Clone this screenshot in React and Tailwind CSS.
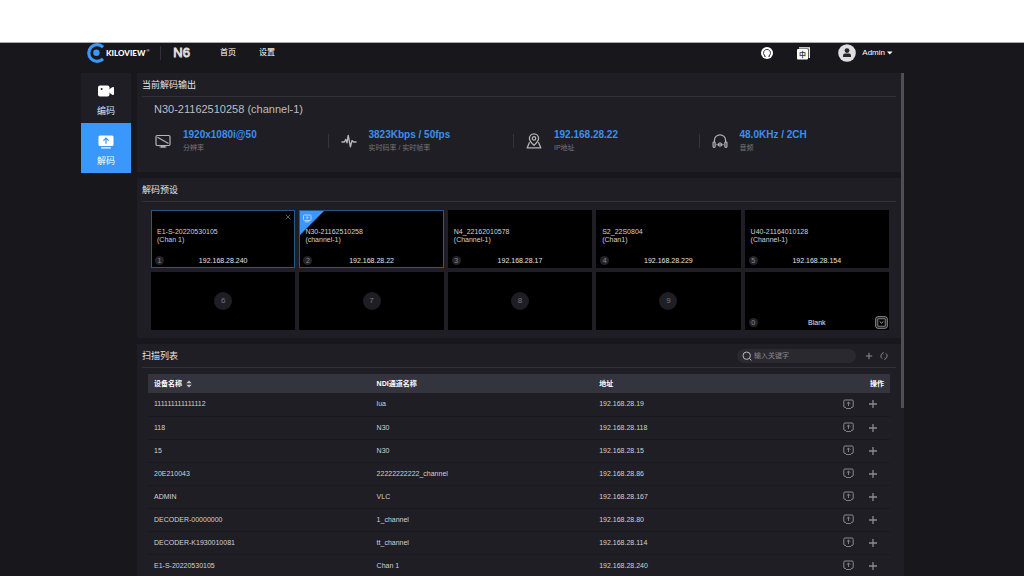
import React from 'react';

const stats = [
  { value: '1920x1080i@50', label: '分辨率', icon: ScreenIcon },
  { value: '3823Kbps / 50fps', label: '实时码率 / 实时帧率', icon: PulseIcon },
  { value: '192.168.28.22', label: 'IP地址', icon: PinIcon },
  { value: '48.0KHz / 2CH', label: '音频', icon: HeadphoneIcon },
];

const presets = [
  { id: 1, name: 'E1-S-20220530105', channel: '(Chan 1)', ip: '192.168.28.240', selected: true },
  { id: 2, name: 'N30-21162510258', channel: '(channel-1)', ip: '192.168.28.22', selected: true, live: true },
  { id: 3, name: 'N4_22162010578', channel: '(Channel-1)', ip: '192.168.28.17' },
  { id: 4, name: 'S2_22S0804', channel: '(Chan1)', ip: '192.168.28.229' },
  { id: 5, name: 'U40-21164010128', channel: '(Channel-1)', ip: '192.168.28.154' },
  { id: 6 },
  { id: 7 },
  { id: 8 },
  { id: 9 },
  { id: 0, ip: 'Blank', blank: true },
];

const devices = [
  ['111111111111112', 'lua', '192.168.28.19'],
  ['118', 'N30', '192.168.28.118'],
  ['15', 'N30', '192.168.28.15'],
  ['20E210043', '22222222222_channel', '192.168.28.86'],
  ['ADMIN', 'VLC', '192.168.28.167'],
  ['DECODER-00000000', '1_channel', '192.168.28.80'],
  ['DECODER-K1930010081', 'tt_channel', '192.168.28.114'],
  ['E1-S-20220530105', 'Chan 1', '192.168.28.240'],
];

function ScreenIcon() {
  return (
    <svg viewBox="0 0 16 16" className="size-4" fill="none" stroke="currentColor" strokeWidth="1.2">
      <rect x="1" y="2.5" width="14" height="10" rx="1.2" />
      <path d="M2.5 4.2 13.5 10.6M4.5 14h7" />
      <path d="M6.5 12.5v1.3h3v-1.3" />
    </svg>
  );
}

function PulseIcon() {
  return (
    <svg viewBox="0 0 16 16" className="size-4" fill="none" stroke="currentColor" strokeWidth="1.4" strokeLinejoin="round" strokeLinecap="round">
      <path d="M1 9h2.400l1.400-2.600L6 9.800 7.200 2.400l2.200 11.400 1.600-6.200L12.600 9H15" />
    </svg>
  );
}

function PinIcon() {
  return (
    <svg viewBox="0 0 16 16" className="size-4" fill="none" stroke="currentColor" strokeWidth="1.3" strokeLinejoin="round">
      <path d="M8 12.200C5.400 9.800 3.400 7.900 3.400 5.400a4.600 4.600 0 0 1 9.200 0C12.600 7.900 10.600 9.800 8 12.200Z" />
      <circle cx="8" cy="5.400" r="1.700" />
      <path d="M3.600 9.200 1.200 14.800h13.600L12.400 9.200" />
    </svg>
  );
}

function HeadphoneIcon() {
  return (
    <svg viewBox="0 0 16 16" className="size-4" fill="none" stroke="currentColor" strokeWidth="1.200" strokeLinecap="round">
      <path d="M2.400 9V7.400a5.600 5.600 0 0 1 11.200 0V9" />
      <rect x="1.100" y="9" width="2" height="5.400" rx=".8" />
      <rect x="12.900" y="9" width="2" height="5.400" rx=".8" />
      <path d="M5 11.400v.4M6.500 10.600v2M8 9.600v4M9.500 10.600v2M11 11.400v.4" />
    </svg>
  );
}

function LogoMark() {
  return (
    <svg viewBox="0 0 20 20" className="size-5" fill="none">
      <path d="M17 4.200A8.300 8.300 0 1 0 17 15.800" stroke="#3a97fb" strokeWidth="3.200" />
      <circle cx="10.400" cy="9.800" r="3.200" fill="#3a97fb" />
    </svg>
  );
}

function CameraIcon() {
  return (
    <svg viewBox="0 0 16 12" className="h-3 w-4" fill="#fff">
      <rect x="0" y="0.500" width="11.500" height="11" rx="2" />
      <path d="M11 4.600 14.200 2.200Q16 1.400 16 3v6q0 1.600-1.800.8L11 7.400Z" />
      <circle cx="3.600" cy="4" r="1" fill="#1f1e24" />
    </svg>
  );
}

function DecodeIcon() {
  return (
    <svg viewBox="0 0 16 14" className="h-3.5 w-4" fill="#fff">
      <rect x="0.500" y="0.500" width="15" height="10.500" rx="1.500" />
      <rect x="3" y="12.200" width="10" height="1.200" rx=".5" />
      <path d="M8 8.800V3.200M5.400 5.600 8 3l2.600 2.600" fill="none" stroke="#3a97fb" strokeWidth="1.200" />
    </svg>
  );
}

function CastIcon() {
  return (
    <svg viewBox="0 0 11 11" className="size-[11px]" fill="none" stroke="currentColor">
      <path d="M3 8.400H2A1.200 1.200 0 0 1 .8 7.200V2.200A1.200 1.200 0 0 1 2 1h7a1.200 1.200 0 0 1 1.200 1.200v5A1.200 1.200 0 0 1 9 8.400H8" />
      <path d="M5.500 7V3.200M3.800 4.700 5.500 3l1.700 1.700M3 9.500h5" strokeWidth=".9" />
    </svg>
  );
}

function PlusIcon({ className }) {
  return (
    <svg viewBox="0 0 10 10" className={className} fill="none" stroke="currentColor" strokeWidth="1.300">
      <path d="M5 1v8M1 5h8" />
    </svg>
  );
}

function Panel({ title, children, tools }) {
  return (
    <section className="bg-[#1f1e24] pl-[5px] pr-[5px]">
      <div className="flex h-6 items-center justify-between border-b border-[#323137]">
        <h2 className="text-[9px] leading-3 text-[#e4e4e6]">{title}</h2>
        {tools}
      </div>
      {children}
    </section>
  );
}

function Badge({ children }) {
  return (
    <span className="flex size-[9px] items-center justify-center rounded-full bg-[#24232b] text-[7px] leading-none text-[#88878d]">
      {children}
    </span>
  );
}

function PresetCard({ preset }) {
  if (!preset.ip) {
    return (
      <button type="button" className="flex h-[58px] items-center justify-center bg-black">
        <span className="flex size-[18px] items-center justify-center rounded-full bg-[#1f1e24] text-[8px] leading-none text-[#77767c]">
          {preset.id}
        </span>
      </button>
    );
  }
  return (
    <div
      className={
        preset.selected
          ? 'relative flex h-[58px] flex-col justify-between border border-[#26588a] bg-black pt-[17px] pb-[2px]'
          : 'relative flex h-[58px] flex-col justify-between border border-black bg-black pt-[17px] pb-[2px]'
      }
    >
      {preset.live && (
        <svg viewBox="0 0 24 24" className="absolute left-0 top-0 size-6">
          <path d="M0 0h24L0 24Z" fill="#3a97fb" />
          <g fill="none" stroke="#b5d8ff" strokeWidth=".9">
            <rect x="3.500" y="4" width="7.500" height="5.500" rx="1" />
            <path d="M7.200 8.200V5.800M6 6.900l1.200-1.200 1.200 1.200M5 10.800h4.500" />
          </g>
        </svg>
      )}
      {preset.id === 1 && (
        <button type="button" aria-label="Remove" className="absolute right-[3px] top-[3px] text-[#77767c]">
          <svg viewBox="0 0 6 6" className="size-[6px]" stroke="currentColor" strokeWidth=".8">
            <path d="M.8.8l4.400 4.400M5.200.8.8 5.200" />
          </svg>
        </button>
      )}
      <p className="relative pl-[5px] text-[7px] leading-2 text-[#d2d2d4]">
        {preset.name}
        <br />
        {preset.channel}
      </p>
      <div className="grid grid-cols-[1fr_auto_1fr] items-center px-[3px] text-[7px] leading-[9px] text-[#e4e4e6]">
        <Badge>{preset.id}</Badge>
        <span>{preset.ip}</span>
      </div>
      {preset.blank && (
        <button type="button" aria-label="Choose preset" className="absolute bottom-0 right-0 text-[#a5a5a8]">
          <svg viewBox="0 0 13 13" className="size-[13px]" fill="none" stroke="currentColor">
            <rect x=".8" y=".8" width="11.400" height="11.400" rx="2" />
            <rect x="2.800" y="2.800" width="7.400" height="7.400" strokeWidth=".8" />
            <path d="M4.600 5.400 6.500 7.200l1.900-1.800" />
          </svg>
        </button>
      )}
    </div>
  );
}

function Header() {
  return (
    <header className="flex h-5 items-center pl-[5px] text-[8px] text-white">
      <a href="#home" className="flex items-center">
        <LogoMark />
        <span className="font-['Lato',sans-serif] text-[8px] font-black leading-3">KILOVIEW</span>
        <span className="mb-1 ml-px text-[4px] leading-none">®</span>
      </a>
      <div className="ml-[11px] h-[14px] w-px bg-[#303037]" />
      <span className="ml-3 text-[13px] leading-5 text-[#5a595f] [-webkit-text-stroke:1px_#dededf]">N6</span>
      <nav className="ml-[30px] flex gap-[23px]">
        <a href="#home">首页</a>
        <a href="#settings">设置</a>
      </nav>
      <div className="ml-auto flex items-center pr-[11px]">
        <button type="button" aria-label="Refresh">
          <svg viewBox="0 0 12 12" className="size-3">
            <circle cx="6" cy="6" r="6" fill="#fff" />
            <path d="M4.300 9A3.500 3.500 0 1 1 7.700 9" fill="none" stroke="#25242a" strokeWidth=".9" />
            <path d="M3.500 7.800 4.900 9.800 2.900 9.600ZM8.500 7.800 7.100 9.800 9.100 9.600Z" fill="#25242a" />
          </svg>
        </button>
        <button type="button" aria-label="语言" className="ml-6">
          <svg viewBox="0 0 13 13" className="size-[13px]">
            <path d="M2 .8h10.300V11" fill="none" stroke="#fff" strokeWidth="1.200" />
            <rect x="0" y="2" width="11" height="10.500" rx="1" fill="#fff" />
            <text x="5.500" y="9.900" textAnchor="middle" fontSize="7" fontWeight="bold" fontFamily="Noto Sans CJK SC, sans-serif" fill="#37363c">中</text>
          </svg>
        </button>
        <button type="button" className="ml-7 flex items-center">
          <svg viewBox="0 0 18 18" className="size-[18px]">
            <circle cx="9" cy="9" r="8.800" fill="#dedee0" />
            <circle cx="9" cy="6.600" r="2.400" fill="#25242a" />
            <path d="M5 13V11.400Q5 9.600 7 9.600h4q2 0 2 1.800V13Z" fill="#25242a" />
          </svg>
          <span className="ml-[6px]">Admin</span>
          <svg viewBox="0 0 6 4" className="ml-[2px] h-1 w-[6px]" fill="#fff">
            <path d="M0 .5h5.600L2.800 3.600Z" />
          </svg>
        </button>
      </div>
    </header>
  );
}

function ScanTools() {
  return (
    <div className="flex items-center pr-2 text-[#8b8a90]">
      <label className="flex h-[14px] w-[119px] items-center gap-[2px] rounded-full bg-[#2a292f] px-[5px]">
        <svg viewBox="0 0 10 10" className="size-[10px] shrink-0" fill="none" stroke="#bcbcc0">
          <circle cx="4.700" cy="4.700" r="3.700" />
          <path d="M7.400 7.400 9.400 9.400" />
        </svg>
        <input
          type="text"
          aria-label="输入关键字"
          placeholder="输入关键字"
          className="w-full min-w-0 bg-transparent text-[7px] leading-[10px] text-white outline-none placeholder:text-[#87868b]"
        />
      </label>
      <button type="button" aria-label="Add" className="ml-[9px]">
        <PlusIcon className="size-2" />
      </button>
      <button type="button" aria-label="Refresh list" className="ml-[7px]">
        <svg viewBox="0 0 8 8" className="size-2" fill="none" stroke="currentColor">
          <path d="M2.600 1.200A3.200 3.200 0 0 0 2.200 6.600M5.400 6.800A3.200 3.200 0 0 0 5.800 1.400" />
          <path d="M4 .3 2.300 1.200 3.400 2.600M4 7.700 5.700 6.800 4.600 5.400" strokeWidth=".6" />
        </svg>
      </button>
    </div>
  );
}

export default function App() {
  return (
    <div className="flex h-screen flex-col overflow-hidden bg-[#18171c] font-['Liberation_Sans','Noto_Sans_CJK_SC',sans-serif]">
      <div className="h-[43px] shrink-0 border-b border-[#a9a9ab] bg-white" />
      <div className="flex min-h-0 flex-1 flex-col gap-[10px] pl-[81px] pr-[120px]">
        <Header />
        <div className="flex min-h-0 flex-1">
          <nav className="mr-[6px] w-[50px] shrink-0 text-[9px] leading-3 text-[#e4e4e6]">
            <a href="#encode" className="flex h-[50px] flex-col items-center justify-end gap-2 bg-[#1f1e24] pb-[6px]">
              <CameraIcon />
              编码
            </a>
            <a href="#decode" className="flex h-[50px] flex-col items-center justify-end gap-[6px] bg-[#3a97fb] pb-[6px] text-white">
              <DecodeIcon />
              解码
            </a>
          </nav>
          <main className="flex min-w-0 flex-1 flex-col gap-[6px] overflow-hidden">
            <Panel title="当前解码输出">
              <p className="pl-3 pt-[5px] text-[11px] leading-[14px] text-[#bdbdc0]">N30-21162510258 (channel-1)</p>
              <div className="grid grid-cols-4 pb-[18px] pr-3 pt-3">
                {stats.map(({ value, label, icon: Icon }, i) => (
                  <div key={value} className="flex items-center">
                    <div className={i === 0 ? 'h-[14px] w-px' : 'h-[14px] w-px bg-[#36353c]'} />
                    <div className="ml-3 text-[#b5b5b8]">
                      <Icon />
                    </div>
                    <div className="ml-3">
                      <p className="text-[10px] font-bold leading-[14px] text-[#3a8ff0]">{value}</p>
                      <p className="text-[7px] leading-3 text-[#77767c]">{label}</p>
                    </div>
                  </div>
                ))}
              </div>
            </Panel>
            <Panel title="解码预设">
              <div className="grid grid-cols-5 gap-1 pb-2 pl-[9px] pr-[7px] pt-2">
                {presets.map((preset) => (
                  <PresetCard key={preset.id} preset={preset} />
                ))}
              </div>
            </Panel>
            <Panel title="扫描列表" tools={<ScanTools />}>
              <div className="pl-[6px] pr-[6px] pt-[6px]">
                <table className="w-full table-fixed text-left text-[7px] leading-3 text-[#d2d2d4]">
                  <thead>
                    <tr className="h-[19px] bg-[#34343f] text-white">
                      <th className="w-[30%] pl-[6px]">
                        <button type="button" className="flex items-center gap-1 font-bold">
                          设备名称
                          <svg viewBox="0 0 6 8" className="h-2 w-[6px]" fill="#c6c6c8">
                            <path d="M.3 3.300 3 .4l2.700 2.900ZM.3 4.700 3 7.600l2.700-2.900Z" />
                          </svg>
                        </button>
                      </th>
                      <th className="w-[30%] pl-[6px]">NDI通道名称</th>
                      <th className="w-1/4 pl-[6px]">地址</th>
                      <th className="w-[15%] pr-[6px] text-right">操作</th>
                    </tr>
                  </thead>
                  <tbody>
                    {devices.map(([name, channel, address]) => (
                      <tr key={name} className="h-[23px] border-b border-[#19181d]">
                        <td className="pl-[6px]">{name}</td>
                        <td className="pl-[6px]">{channel}</td>
                        <td className="pl-[6px]">{address}</td>
                        <td className="pr-3">
                          <div className="flex items-center justify-end gap-[14px] text-[#8b8a90]">
                            <button type="button" aria-label="Decode">
                              <CastIcon />
                            </button>
                            <button type="button" aria-label="Add">
                              <PlusIcon className="size-[10px]" />
                            </button>
                          </div>
                        </td>
                      </tr>
                    ))}
                  </tbody>
                </table>
              </div>
            </Panel>
          </main>
          <div className="w-[3px] shrink-0 bg-[#1f1e24]">
            <div className="h-2/3 bg-[#504f53]" />
          </div>
        </div>
      </div>
    </div>
  );
}
